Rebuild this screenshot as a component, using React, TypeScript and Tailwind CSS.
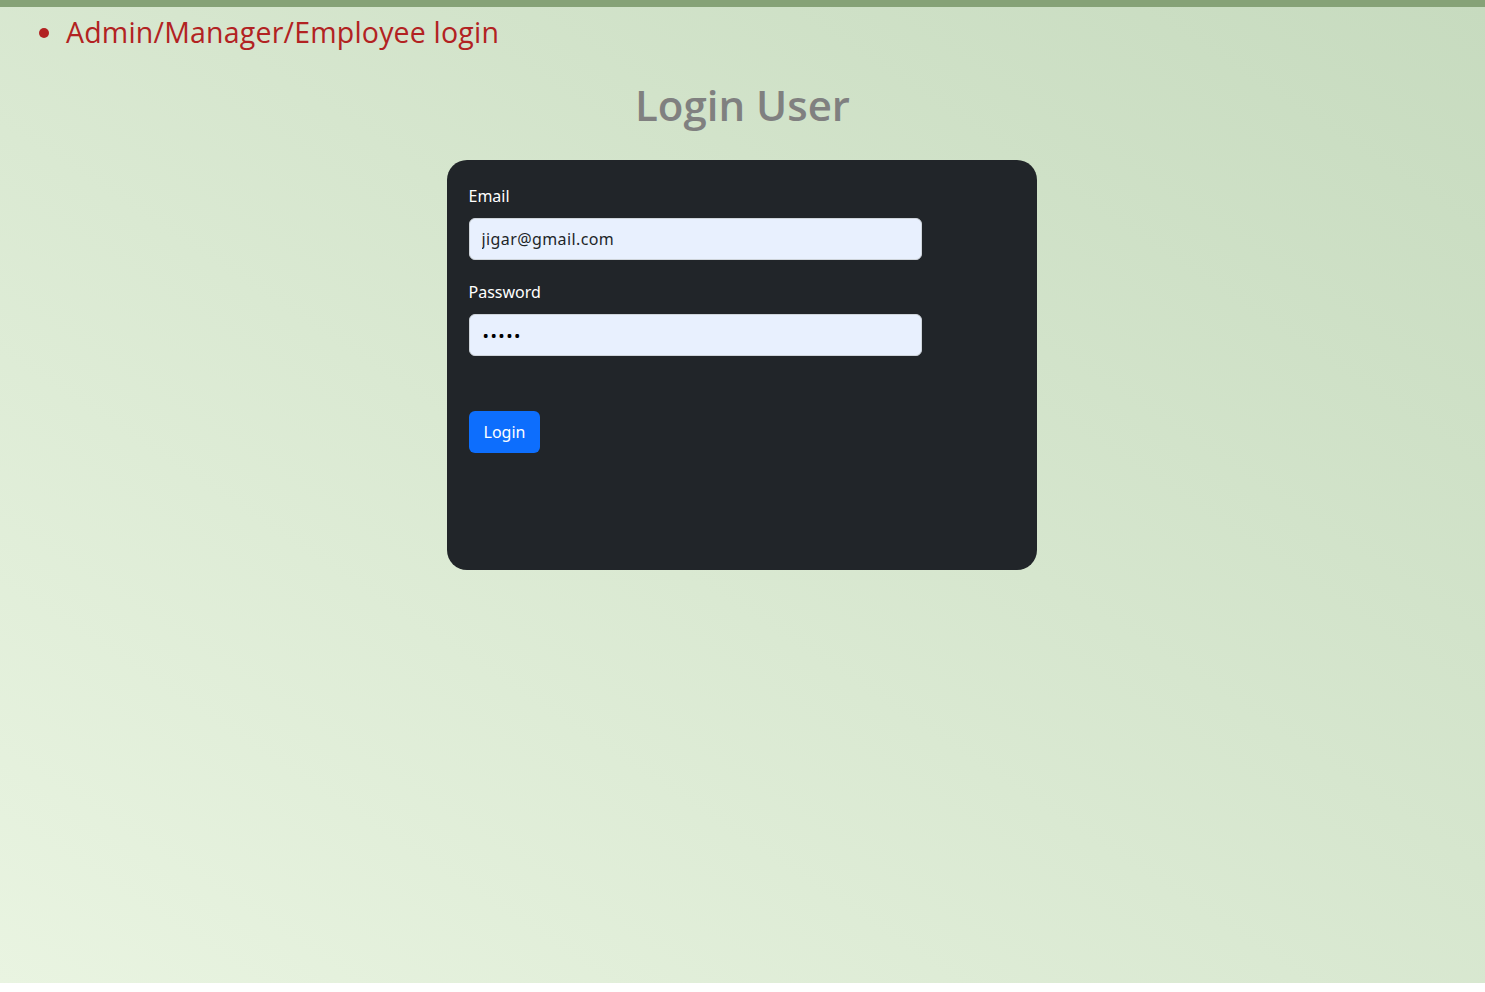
export default function App() {
  return (
    <div className="min-h-screen bg-white">
      <div className="h-[983px] border-t-[7px] border-t-[#86a277] bg-gradient-to-tr from-[#e9f4e1] to-[#c7dbbf]">
        <ul className="list-disc pl-[66px] pt-[10px] text-[#b22222] marker:text-[#b22222]">
          <li className="font-['Open_Sans',sans-serif] text-[28.5px] leading-[30px] tracking-[0.2px]">
            Admin/Manager/Employee login
          </li>
        </ul>
        <h1 className="mt-[30px] text-center font-['Open_Sans',sans-serif] text-[42px] font-semibold leading-[56px] text-[#808080]">
          Login User
        </h1>
        <div className="mx-auto mt-[27px] h-[410px] w-[590px] -translate-x-[1px] rounded-[20px] bg-[#212529] px-[22px] pt-[26px] font-['Noto_Sans',sans-serif]">
          <form className="w-[453px]" onSubmit={(e) => e.preventDefault()}>
            <label className="block text-[16px] leading-[20px] text-white">Email</label>
            <input
              type="email"
              defaultValue="jigar@gmail.com"
              className="mt-[12px] block h-[42px] w-full rounded-[6px] border border-[#ced4da] bg-[#e8f0fe] px-[12px] text-[16px] tracking-[0.4px] text-[#212529] outline-none"
            />
            <label className="mt-[22px] block text-[16px] leading-[20px] text-white">Password</label>
            <input
              type="password"
              defaultValue="12345"
              className="mt-[12px] block h-[42px] w-full rounded-[6px] border border-[#ced4da] bg-[#e8f0fe] px-[13px] text-[17px] tracking-[1.5px] text-black outline-none"
            />
            <button
              type="submit"
              className="mt-[55px] h-[42px] rounded-[6px] bg-[#0d6efd] px-[15px] text-[16px] text-white"
            >
              Login
            </button>
          </form>
        </div>
      </div>
    </div>
  );
}
